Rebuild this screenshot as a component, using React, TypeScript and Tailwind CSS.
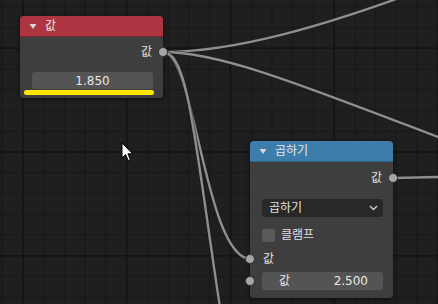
import React from 'react';

const font = { fontFamily: '"DejaVu Sans", "Noto Sans CJK KR", sans-serif' };

const STEP = 20.75;

function Grid() {
  const xs = Array.from({ length: 23 }, (_, i) => 2.25 + i * STEP);
  const ys = Array.from({ length: 16 }, (_, i) => 6.75 + i * STEP);
  return (
    <svg className="absolute inset-0" width={438} height={304}>
      {xs.map((x, i) => (
        <line
          key={'x' + i}
          x1={x}
          x2={x}
          y1={0}
          y2={304}
          stroke={(i - 1) % 5 === 0 ? '#131313' : '#181818'}
          strokeWidth={(i - 1) % 5 === 0 ? 1.6 : 1}
        />
      ))}
      {ys.map((y, i) => (
        <line
          key={'y' + i}
          x1={0}
          x2={438}
          y1={y}
          y2={y}
          stroke={(i - 2) % 5 === 0 ? '#131313' : '#181818'}
          strokeWidth={(i - 2) % 5 === 0 ? 1.6 : 1}
        />
      ))}
    </svg>
  );
}

function Wires() {
  const wires = [
    'M163,52 C230,52 320,30 460,-25',
    'M163,52 C230,52 330,97 520,168',
    'M163,52 C195,52 205,259 251,259',
    'M163,52 C190,52 195,150 225,340',
    'M393,178 L440,177',
  ];
  return (
    <svg className="absolute inset-0" width={438} height={304} fill="none">
      {wires.map((d, i) => (
        <g key={i}>
          <path d={d} stroke="#1a1a1a" strokeWidth={4} strokeOpacity={0.6} />
          <path d={d} stroke="#8e8e8e" strokeWidth={2.4} />
        </g>
      ))}
    </svg>
  );
}

function Socket({ className }: { className: string }) {
  return (
    <div
      className={`absolute w-[10px] h-[10px] rounded-full bg-[#a6a6a6] border border-[#333333] ${className}`}
    />
  );
}

function Arrow() {
  return (
    <svg width="8" height="7" viewBox="0 0 8 7">
      <path d="M0.5,1 L7.5,1 L4,6 Z" fill="#d8d8d8" />
    </svg>
  );
}

function Cursor() {
  return (
    <svg className="absolute left-[121px] top-[142px]" width="14" height="21" viewBox="0 0 14 21">
      <path
        d="M1,1 L1,16 L4.6,12.6 L7.2,18.6 L9.4,17.6 L6.9,11.8 L11.6,11.8 Z"
        fill="#ffffff"
        stroke="#000000"
        strokeWidth={1}
        strokeLinejoin="round"
      />
    </svg>
  );
}

function ValueNode() {
  return (
    <div className="absolute left-[20px] top-[16px] w-[143px] h-[82px] rounded-[4px] bg-[#3e3e3e] shadow-[0_1px_4px_rgba(0,0,0,0.6)] flex flex-col">
      <div className="h-[21px] rounded-t-[4px] bg-[#ac3541] border-b border-[#7a2630] flex items-center pl-[9px] gap-[8px] text-[12px] text-[#e6e6e6]">
        <Arrow />
        <span>값</span>
      </div>
      <div className="h-[18px] mt-[6px] flex items-center justify-end pr-[11px] text-[12px] text-[#e0e0e0]">
        값
      </div>
      <div className="mt-[11px] ml-[12px] w-[121px] h-[17px] rounded-[3px] bg-[#545454] flex items-center justify-center text-[12px] text-[#e8e8e8]">
        1.850
      </div>
      <div className="mt-[1px] ml-[4px] w-[130px] h-[5px] rounded-full bg-[#ffe600]" />
      <Socket className="right-[-5px] top-[31px]" />
    </div>
  );
}

function MultiplyNode() {
  return (
    <div className="absolute left-[250px] top-[141px] w-[143px] h-[157px] rounded-[4px] bg-[#3e3e3e] shadow-[0_1px_4px_rgba(0,0,0,0.6)] flex flex-col">
      <div className="h-[21px] rounded-t-[4px] bg-[#3d7dab] border-b border-[#2b5f85] flex items-center pl-[9px] gap-[8px] text-[12px] text-[#e6e6e6]">
        <Arrow />
        <span>곱하기</span>
      </div>
      <div className="h-[18px] mt-[7px] flex items-center justify-end pr-[11px] text-[12px] text-[#e0e0e0]">
        값
      </div>
      <div className="mt-[12px] ml-[12px] w-[121px] h-[18px] rounded-[3px] bg-[#282828] flex items-center justify-between pl-[7px] pr-[5px] text-[12px] text-[#e0e0e0]">
        <span>곱하기</span>
        <svg width="9" height="6" viewBox="0 0 9 6">
          <path d="M1,1 L4.5,4.5 L8,1" stroke="#d0d0d0" strokeWidth={1.4} fill="none" />
        </svg>
      </div>
      <div className="mt-[10px] ml-[12px] h-[16px] flex items-center gap-[6px] text-[12px] text-[#e0e0e0]">
        <div className="w-[13px] h-[13px] rounded-[2px] bg-[#595959]" />
        <span>클램프</span>
      </div>
      <div className="mt-[8px] ml-[13px] h-[16px] flex items-center text-[12px] text-[#e0e0e0]">
        값
      </div>
      <div className="mt-[5px] ml-[12px] w-[121px] h-[18px] rounded-[3px] bg-[#545454] flex items-center justify-between pl-[17px] pr-[15px] text-[12px] text-[#e8e8e8]">
        <span>값</span>
        <span>2.500</span>
      </div>
      <Socket className="right-[-5px] top-[32px]" />
      <Socket className="left-[-5px] top-[113px]" />
      <Socket className="left-[-5px] top-[135px]" />
    </div>
  );
}

export default function App() {
  return (
    <div className="relative w-[438px] h-[304px] overflow-hidden bg-[#1f1f1f]" style={font}>
      <Grid />
      <Wires />
      <ValueNode />
      <MultiplyNode />
      <Cursor />
    </div>
  );
}
